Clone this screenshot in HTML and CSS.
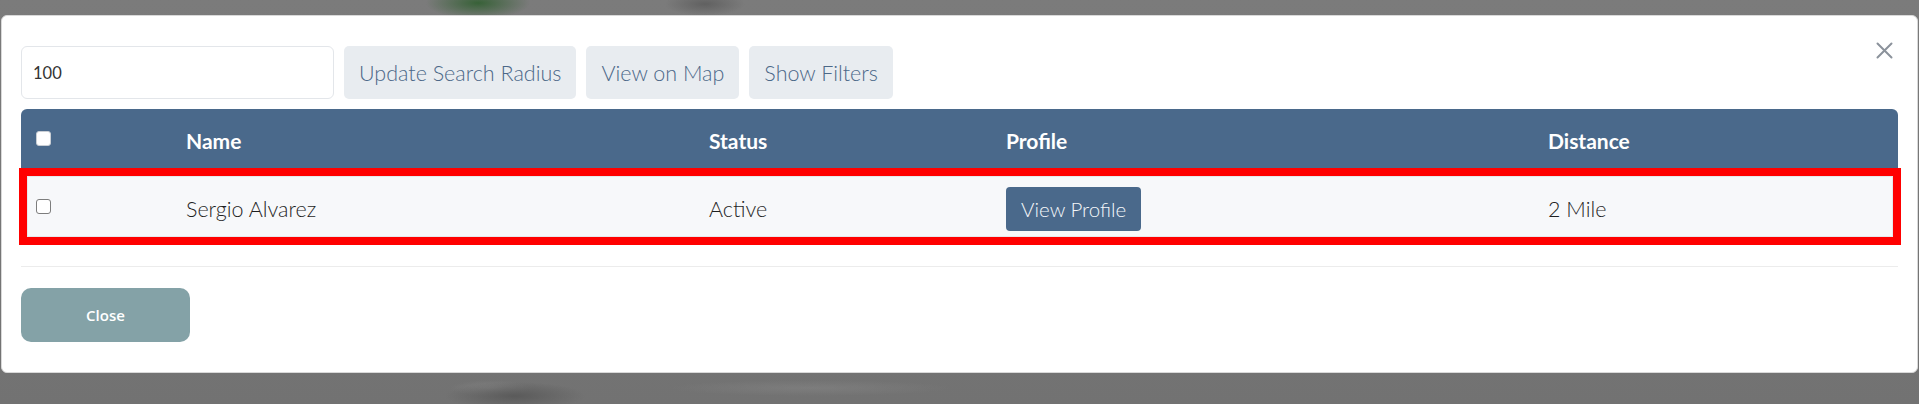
FILE: index.html
```html
<!DOCTYPE html>
<html lang="en">
<head>
<meta charset="utf-8">
<title>Nearby Members</title>
<link rel="stylesheet" href="styles.css">
</head>
<body>
  <div class="modal">
    <button class="modal-x" aria-label="Close">
      <svg width="17" height="17" viewBox="0 0 17 17"><path d="M1.5 1.5 L15.5 15.5 M15.5 1.5 L1.5 15.5" stroke="#8b929b" stroke-width="2" stroke-linecap="round" fill="none"/></svg>
    </button>
    <div class="toolbar">
      <input class="radius-input" type="text" value="100">
      <button class="tool-btn">Update Search Radius</button>
      <button class="tool-btn">View on Map</button>
      <button class="tool-btn">Show Filters</button>
    </div>
    <div class="results">
      <div class="results-head">
        <div class="cell"><span class="check check-head"></span></div>
        <div class="cell">Name</div>
        <div class="cell">Status</div>
        <div class="cell">Profile</div>
        <div class="cell">Distance</div>
      </div>
      <div class="results-row highlighted">
        <div class="cell cell-check"><span class="check"></span></div>
        <div class="cell">Sergio Alvarez</div>
        <div class="cell">Active</div>
        <div class="cell"><button class="profile-btn">View Profile</button></div>
        <div class="cell">2 Mile</div>
      </div>
    </div>
    <div class="modal-footer">
      <button class="close-btn">Close</button>
    </div>
  </div>
</body>
</html>
```

FILE: styles.css
```css
* { box-sizing: border-box; }

html, body { height: 100%; }

body {
  margin: 0;
  padding: 15px 0 0 1px;
  font-family: Lato, "Noto Sans", sans-serif;
  color: #333;
  overflow: hidden;
  background:
    radial-gradient(ellipse 52px 16px at 478px 3px, rgba(52, 96, 52, 0.95), rgba(52, 96, 52, 0) 100%),
    radial-gradient(ellipse 40px 12px at 705px 4px, rgba(90, 90, 90, 0.8), rgba(90, 90, 90, 0) 100%),
    radial-gradient(ellipse 70px 14px at 515px 396px, rgba(88, 88, 88, 0.9), rgba(88, 88, 88, 0) 100%),
    radial-gradient(ellipse 40px 8px at 490px 388px, rgba(140, 140, 140, 0.5), rgba(140, 140, 140, 0) 100%),
    radial-gradient(ellipse 140px 8px at 810px 388px, rgba(135, 135, 135, 0.5), rgba(135, 135, 135, 0) 100%),
    linear-gradient(#7b7b7b, #727272);
}

.modal {
  position: relative;
  width: 1917px;
  background: #fff;
  border: 1px solid #d9d9d9;
  border-radius: 6px;
  padding: 30px 19px 30px 19px;
}

.modal-x {
  position: absolute;
  top: 26px;
  right: 24px;
  width: 17px;
  height: 17px;
  padding: 0;
  border: 0;
  background: none;
  display: flex;
}

.toolbar {
  display: flex;
  gap: 10px;
  height: 53px;
}

.radius-input {
  width: 313px;
  height: 53px;
  border: 1px solid #e3e6ea;
  border-radius: 6px;
  padding: 0 0 0 11px;
  font-family: Lato, sans-serif;
  font-size: 16.5px;
  font-weight: 400;
  color: #333;
  outline: none;
}

.tool-btn {
  height: 53px;
  padding: 0 15px;
  border: 0;
  border-radius: 5px;
  background: #e8ecf0;
  color: #4c6888;
  font-family: Lato, sans-serif;
  font-weight: 300;
  font-size: 21.5px;
}

.results {
  margin-top: 10px;
}

.results-head {
  display: grid;
  grid-template-columns: 150px 523px 297px 542px 1fr;
  height: 59px;
  align-items: center;
  background: #4a698b;
  border-radius: 6px 6px 0 0;
  color: #fff;
  font-weight: 700;
  font-size: 21px;
}

.cell {
  padding-left: 15px;
  display: flex;
  align-items: center;
}

.results-head .cell { padding-top: 3px; }

.results-row {
  display: grid;
  grid-template-columns: 144px 523px 297px 542px 1fr;
  height: 77px;
  align-items: center;
  margin: 0 -3px 0 -2px;
  background: #f7f8fa;
  font-size: 21.5px;
  font-weight: 300;
  color: #1f1f1f;
}

.results-row .cell { padding-top: 4px; }
.results-row .cell-check { padding-top: 0; padding-left: 9px; }

.highlighted {
  border: 8px solid #ff0000;
  box-shadow: inset 0 0 0 1px #e6e8eb;
}

.check {
  display: block;
  width: 15px;
  height: 15px;
  border: 1px solid #7d7d7d;
  border-radius: 3px;
  background: #fff;
}

.check-head {
  border-color: #c9ced4;
  margin-top: -4px;
}

.profile-btn {
  height: 44px;
  padding: 0 15px;
  border: 0;
  border-radius: 4px;
  background: #4a698b;
  color: #f4f7fa;
  font-family: Lato, sans-serif;
  font-weight: 300;
  font-size: 20.5px;
}

.modal-footer {
  margin-top: 21px;
  border-top: 1px solid #ececec;
  padding-top: 21px;
}

.close-btn {
  width: 169px;
  height: 54px;
  border: 0;
  border-radius: 10px;
  background: #84a2a7;
  color: #fff;
  font-family: "Open Sans", sans-serif;
  font-weight: 600;
  font-size: 15px;
  display: block;
}
```
